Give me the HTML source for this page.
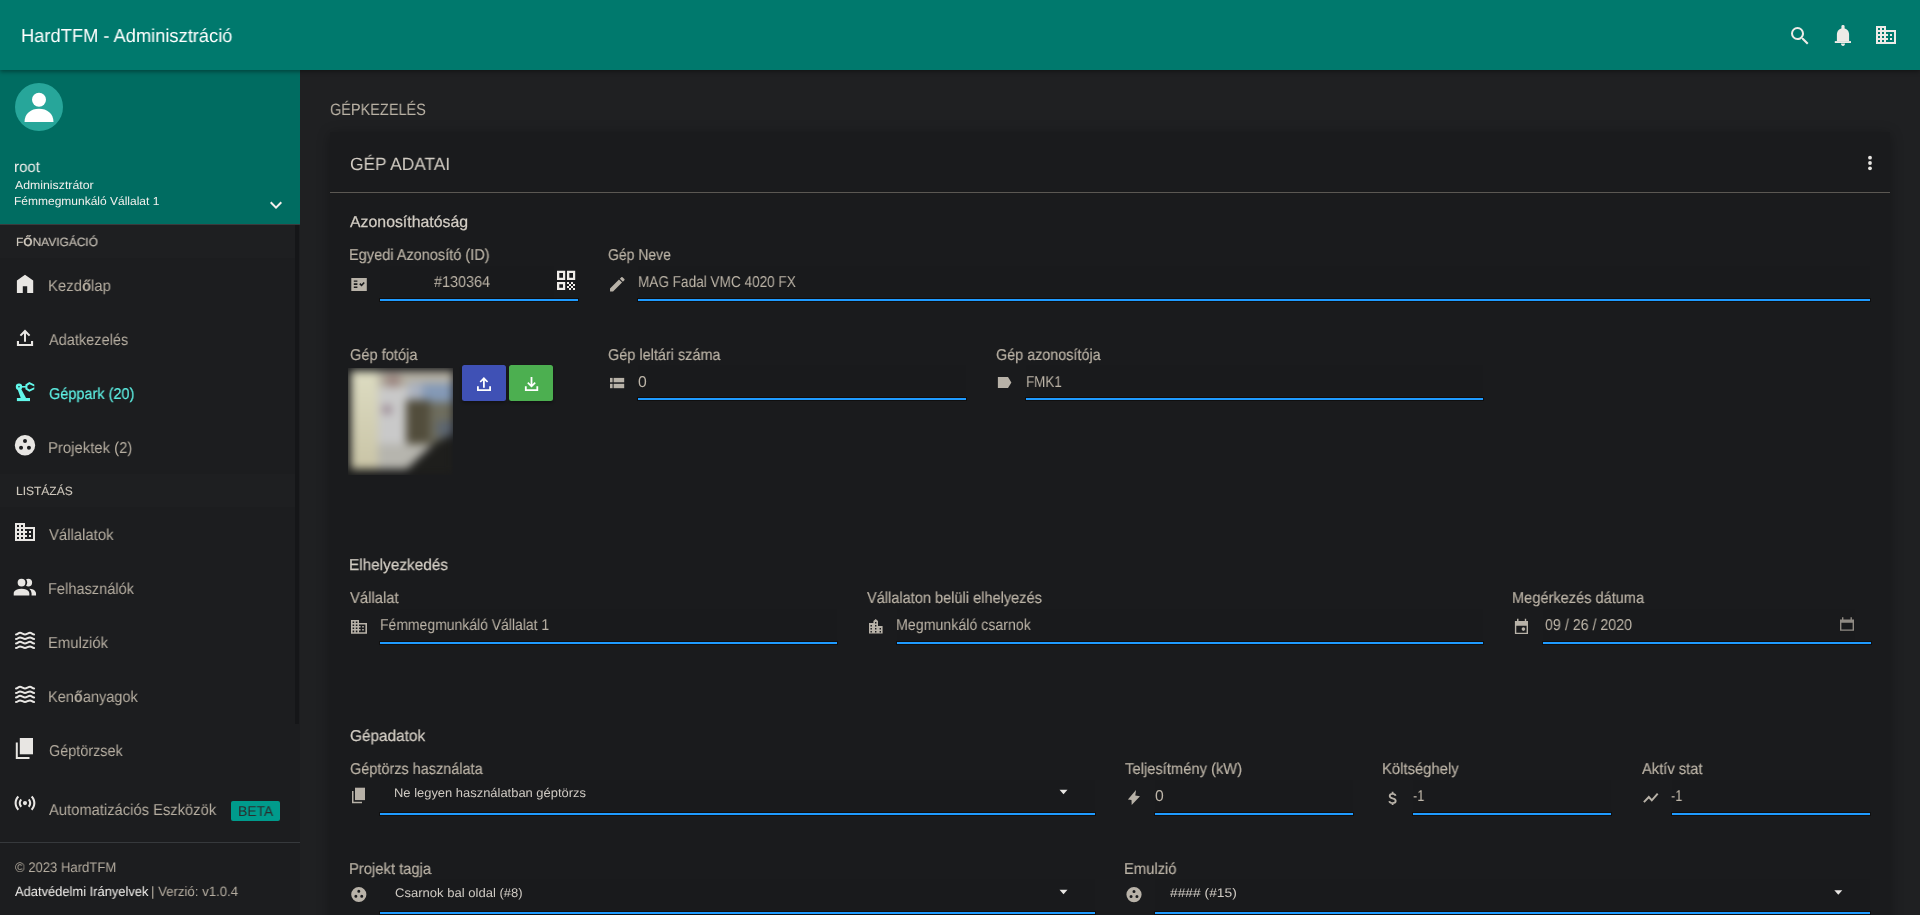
<!DOCTYPE html>
<html><head><meta charset="utf-8"><title>HardTFM - Adminisztráció</title>
<style>
html,body{text-rendering:geometricPrecision;margin:0;padding:0;width:1920px;height:915px;overflow:hidden;background:#1f2022;font-family:"Liberation Sans",sans-serif;}
.a{position:absolute;}
.t{position:absolute;z-index:5;will-change:transform;white-space:nowrap;font-family:"Liberation Sans",sans-serif;}
svg{position:absolute;z-index:5;overflow:visible;}
.ul{position:absolute;height:2px;background:#1f9bff;box-shadow:0 0 0 1px rgba(10,6,4,0.55);}
.slot{position:absolute;background:#191a1c;}

</style></head><body>
<!-- header -->
<div class="a" style="left:0;top:0;width:1920px;height:70px;background:#00796d;box-shadow:0 2px 4px rgba(0,0,0,0.35);z-index:3"></div>
<!-- sidebar -->
<div class="a" style="left:0;top:70px;width:300px;height:845px;background:#1c1d1f;z-index:1"></div>
<div class="a" style="left:295px;top:224px;width:4px;height:500px;background:#151618;z-index:2"></div>
<div class="a" style="left:0;top:70px;width:300px;height:154px;background:#006c61;z-index:2"></div>
<div class="a" style="left:0;top:224px;width:295px;height:34px;background:#1e1f21;z-index:2"></div>
<div class="a" style="left:0;top:474px;width:295px;height:33px;background:#1e1f21;z-index:2"></div>
<div class="a" style="left:0;top:224px;width:300px;height:1px;background:#3a3b3d;z-index:2"></div>
<div class="a" style="left:15px;top:83px;width:48px;height:48px;border-radius:50%;background:#27a69a;z-index:2"></div>
<div class="a" style="left:0;top:842px;width:300px;height:1px;background:#36393c;z-index:2"></div>
<div class="a" style="left:231px;top:801px;width:49px;height:20px;border-radius:2px;background:#009b8c;z-index:2"></div>
<!-- card -->
<div class="a" style="left:330px;top:132px;width:1560px;height:800px;background:#1a1b1d;box-shadow:0 2px 12px rgba(0,0,0,0.3);"></div>
<div class="a" style="left:330px;top:192px;width:1560px;height:1px;background:#5b5853;"></div>
<!-- slots -->
<div class="slot" style="left:380px;top:266px;width:174px;height:33px"></div>
<div class="slot" style="left:638px;top:266px;width:1232px;height:33px"></div>
<div class="slot" style="left:638px;top:365px;width:328px;height:33px"></div>
<div class="slot" style="left:1026px;top:365px;width:457px;height:33px"></div>
<div class="slot" style="left:380px;top:609px;width:457px;height:33px"></div>
<div class="slot" style="left:897px;top:609px;width:586px;height:33px"></div>
<div class="slot" style="left:1543px;top:609px;width:312px;height:33px"></div>
<div class="slot" style="left:380px;top:780px;width:715px;height:33px"></div>
<div class="slot" style="left:1155px;top:780px;width:198px;height:33px"></div>
<div class="slot" style="left:1413px;top:780px;width:198px;height:33px"></div>
<div class="slot" style="left:1672px;top:780px;width:198px;height:33px"></div>
<div class="slot" style="left:380px;top:879px;width:715px;height:33px"></div>
<div class="slot" style="left:1155px;top:879px;width:715px;height:33px"></div>
<!-- underlines -->
<div class="ul" style="left:380px;top:299px;width:198px"></div>
<div class="ul" style="left:638px;top:299px;width:1232px"></div>
<div class="ul" style="left:638px;top:398px;width:328px"></div>
<div class="ul" style="left:1026px;top:398px;width:457px"></div>
<div class="ul" style="left:380px;top:642px;width:457px"></div>
<div class="ul" style="left:897px;top:642px;width:586px"></div>
<div class="ul" style="left:1543px;top:642px;width:328px"></div>
<div class="ul" style="left:380px;top:813px;width:715px"></div>
<div class="ul" style="left:1155px;top:813px;width:198px"></div>
<div class="ul" style="left:1413px;top:813px;width:198px"></div>
<div class="ul" style="left:1672px;top:813px;width:198px"></div>
<div class="ul" style="left:380px;top:912px;width:715px"></div>
<div class="ul" style="left:1155px;top:912px;width:715px"></div>
<!-- photo -->
<div class="a" style="left:348px;top:368px;width:105px;height:107px;overflow:hidden;background:#1a1b1d">
 <div class="a" style="left:0;top:0;width:105px;height:107px;filter:blur(4.5px)">
  <div class="a" style="left:3px;top:3px;width:100px;height:100px;background:#b9b6a8"></div>
  <div class="a" style="left:3px;top:3px;width:28px;height:99px;background:linear-gradient(#dddcc2,#c9c4a6)"></div>
  <div class="a" style="left:30px;top:18px;width:30px;height:84px;background:#c9c9c9"></div>
  <div class="a" style="left:30px;top:3px;width:75px;height:16px;background:#b5b0a2"></div>
  <div class="a" style="left:37px;top:6px;width:16px;height:13px;background:#9b8680;border-radius:40%"></div>
  <div class="a" style="left:34px;top:37px;width:10px;height:9px;background:#9c8a94;border-radius:40%"></div>
  <div class="a" style="left:60px;top:14px;width:45px;height:20px;background:#abb2bf"></div>
  <div class="a" style="left:74px;top:16px;width:31px;height:18px;background:#8499b6"></div>
  <div class="a" style="left:58px;top:32px;width:24px;height:46px;background:#524d3c"></div>
  <div class="a" style="left:82px;top:34px;width:23px;height:42px;background:#6e6d5e"></div>
  <div class="a" style="left:89px;top:53px;width:16px;height:16px;background:#5c6570"></div>
  <div class="a" style="left:30px;top:76px;width:60px;height:27px;background:#b6b5ae"></div>
  <div class="a" style="left:0;top:0;width:105px;height:107px;background:#1e1e1c;clip-path:polygon(82% 70%,100% 62%,100% 100%,50% 100%)"></div>
  <div class="a" style="left:0;top:101px;width:105px;height:6px;background:#1e1e1c"></div>
 </div>
</div>
<!-- buttons -->
<div class="a" style="left:462px;top:365px;width:44px;height:36px;background:#3f51b5;border-radius:2.5px;box-shadow:0 2px 3px rgba(0,0,0,0.3)"></div>
<div class="a" style="left:509px;top:365px;width:44px;height:36px;background:#4caf50;border-radius:2.5px;box-shadow:0 2px 3px rgba(0,0,0,0.3)"></div>
<svg width="1920" height="915" style="left:0;top:0;z-index:6">
<!-- header icons -->
<g fill="#eeebe7">
 <g transform="translate(1787.8,23.8)"><path d="M9.5,3A6.5,6.5 0 0,1 16,9.5C16,11.11 15.41,12.59 14.44,13.73L14.71,14H15.5L20.5,19L19,20.5L14,15.5V14.71L13.73,14.44C12.59,15.41 11.11,16 9.5,16A6.5,6.5 0 0,1 3,9.5A6.5,6.5 0 0,1 9.5,3M9.5,5C7,5 5,7 5,9.5C5,12 7,14 9.5,14C12,14 14,12 14,9.5C14,7 12,5 9.5,5Z" transform="translate(0.2,0.2) scale(1.0)"/></g>
 <!-- bell -->
 <rect x="1841.4" y="25" width="3.2" height="4.5" rx="1.4"/>
 <path d="M1836.9,41.2 V34.5 C1836.9,30.6 1839.6,28.2 1843,28.2 C1846.4,28.2 1849.1,30.6 1849.1,34.5 V41.2 Z"/>
 <rect x="1834.8" y="41.1" width="16.2" height="1.9"/>
 <path d="M1841,43.6 H1845 C1845,45 1844.2,46 1843,46 C1841.8,46 1841,45 1841,43.6Z"/>
 <g transform="translate(1874,23)"><path d="M18,15H16V17H18M18,11H16V13H18M20,19H12V17H14V15H12V13H14V11H12V9H20M10,7H8V5H10M10,11H8V9H10M10,15H8V13H10M10,19H8V17H10M6,7H4V5H6M6,11H4V9H6M6,15H4V13H6M6,19H4V17H6M12,7V3H2V21H22V7H12Z"/></g>
</g>
<!-- avatar person -->
<g fill="#ffffff">
 <circle cx="39" cy="99.7" r="7"/>
 <path d="M24.5,122 C24.5,113.5 31,108.8 39,108.8 C47,108.8 53.5,113.5 53.5,122 Z"/>
</g>
<!-- chevron -->
<g transform="translate(264,193)" fill="#f4efec"><path d="M7.41,8.58L12,13.17L16.59,8.58L18,10L12,16L6,10L7.41,8.58Z"/></g>
<!-- nav icons -->
<g fill="#e8e6e3">
 <!-- home -->
 <path d="M25,274.8 L33.2,280.5 V293 H27.2 V286.2 H22.8 V293 H16.9 V280.5 Z"/>
 <!-- upload tray -->
 <path d="M25,329.6 L30.3,334.9 L28.9,336.3 L26,333.4 V341.8 H24 V333.4 L21.1,336.3 L19.7,334.9 Z"/>
 <path d="M16.9,341 H19 V344 H31 V341 H33.1 V346.1 H16.9 Z"/>
 <!-- projektek circle -->
 <path fill-rule="evenodd" d="M25.00,435.10 A10.2,10.2 0 1,1 25.00,455.50 A10.2,10.2 0 1,1 25.00,435.10 Z M25.00,439.10 A2.0,2.0 0 1,0 25.00,443.10 A2.0,2.0 0 1,0 25.00,439.10 Z M21.05,445.70 A2.0,2.0 0 1,0 21.05,449.70 A2.0,2.0 0 1,0 21.05,445.70 Z M28.95,445.70 A2.0,2.0 0 1,0 28.95,449.70 A2.0,2.0 0 1,0 28.95,445.70 Z"/>
 <!-- domain -->
 <g transform="translate(13,520)"><path d="M18,15H16V17H18M18,11H16V13H18M20,19H12V17H14V15H12V13H14V11H12V9H20M10,7H8V5H10M10,11H8V9H10M10,15H8V13H10M10,19H8V17H10M6,7H4V5H6M6,11H4V9H6M6,15H4V13H6M6,19H4V17H6M12,7V3H2V21H22V7H12Z"/></g>
 <!-- people -->
 <g transform="translate(11.5,574.2) scale(1.115)"><path d="M16 17V19H2V17S2 13 9 13 16 17 16 17M12.5 7.5A3.5 3.5 0 1 0 9 11A3.5 3.5 0 0 0 12.5 7.5M15.94 13A5.32 5.32 0 0 1 18 17V19H22V17S22 13.37 15.94 13M15 4A3.39 3.39 0 0 0 13.07 4.59A5 5 0 0 1 13.07 10.41A3.39 3.39 0 0 0 15 11A3.5 3.5 0 0 0 18.5 7.5A3.5 3.5 0 0 0 15 4Z"/></g>
 <!-- copy sheets -->
 <rect x="19.8" y="738" width="13.2" height="16.3"/>
 <path d="M15.8,742.5 H17.8 V757 H29.5 V759 H15.8 Z"/>
</g>
<g fill="none" stroke="#e8e6e3" stroke-width="2" stroke-linecap="round">
 <path d="M16,634.4 C17.8,634.4 18.2,632.8 20,632.8 C21.8,632.8 23.2,634.4 25,634.4 C26.8,634.4 28.2,632.8 30,632.8 C31.8,632.8 32.2,634.4 34.1,634.4"/>
 <path d="M16,639.0 C17.8,639.0 18.2,637.4 20,637.4 C21.8,637.4 23.2,639.0 25,639.0 C26.8,639.0 28.2,637.4 30,637.4 C31.8,637.4 32.2,639.0 34.1,639.0"/>
 <path d="M16,643.4 C17.8,643.4 18.2,641.8 20,641.8 C21.8,641.8 23.2,643.4 25,643.4 C26.8,643.4 28.2,641.8 30,641.8 C31.8,641.8 32.2,643.4 34.1,643.4"/>
 <path d="M16,648.0 C17.8,648.0 18.2,646.4 20,646.4 C21.8,646.4 23.2,648.0 25,648.0 C26.8,648.0 28.2,646.4 30,646.4 C31.8,646.4 32.2,648.0 34.1,648.0"/>
 <path d="M16,688.4 C17.8,688.4 18.2,686.8 20,686.8 C21.8,686.8 23.2,688.4 25,688.4 C26.8,688.4 28.2,686.8 30,686.8 C31.8,686.8 32.2,688.4 34.1,688.4"/>
 <path d="M16,693.0 C17.8,693.0 18.2,691.4 20,691.4 C21.8,691.4 23.2,693.0 25,693.0 C26.8,693.0 28.2,691.4 30,691.4 C31.8,691.4 32.2,693.0 34.1,693.0"/>
 <path d="M16,697.4 C17.8,697.4 18.2,695.8 20,695.8 C21.8,695.8 23.2,697.4 25,697.4 C26.8,697.4 28.2,695.8 30,695.8 C31.8,695.8 32.2,697.4 34.1,697.4"/>
 <path d="M16,702.0 C17.8,702.0 18.2,700.4 20,700.4 C21.8,700.4 23.2,702.0 25,702.0 C26.8,702.0 28.2,700.4 30,700.4 C31.8,700.4 32.2,702.0 34.1,702.0"/>
</g>
<g fill="#e8e6e3" transform="translate(12.5,790.6) scale(1.04)"><path d="M4.93,4.93C3.12,6.74 2,9.24 2,12C2,14.76 3.12,17.26 4.93,19.07L6.34,17.66C4.89,16.22 4,14.22 4,12C4,9.79 4.89,7.78 6.34,6.34L4.93,4.93M19.07,4.93L17.66,6.34C19.11,7.78 20,9.79 20,12C20,14.22 19.11,16.22 17.66,17.66L19.07,19.07C20.88,17.26 22,14.76 22,12C22,9.24 20.88,6.74 19.07,4.93M7.76,7.76C6.67,8.85 6,10.35 6,12C6,13.65 6.67,15.15 7.76,16.24L9.17,14.83C8.45,14.11 8,13.11 8,12C8,10.89 8.45,9.89 9.17,9.17L7.76,7.76M16.24,7.76L14.830,9.17C15.55,9.89 16,10.89 16,12C16,13.11 15.55,14.11 14.83,14.83L16.24,16.24C17.33,15.15 18,13.65 18,12C18,10.35 17.33,8.85 16.24,7.76M12,10A2,2 0 0,0 10,12A2,2 0 0,0 12,14A2,2 0 0,0 14,12A2,2 0 0,0 12,10Z"/></g>
<!-- robot arm (active) -->
<g fill="#62f7ea">
 <rect x="16.9" y="398" width="13.1" height="3.1"/>
 <path d="M17.3,388.5 L20.4,387.5 L26.2,398.2 L20.8,398.2 Z"/>
 <path fill-rule="evenodd" d="M19,383.6 A3.2,3.2 0 1,1 19,390 A3.2,3.2 0 1,1 19,383.6 Z M19,386 A0.8,0.8 0 1,0 19,387.6 A0.8,0.8 0 1,0 19,386 Z"/>
 <rect x="21.5" y="386" width="5" height="1.6"/>
 <path d="M25.4,384.6 L29.3,382.1 L34.3,384.6 L34.3,386.6 L29.6,384.3 L27.4,385.8 L27.4,388.2 L29.6,389.6 L34.3,387.3 L34.3,389.3 L29.3,391.7 L25.4,389.2 Z"/>
</g>
<!-- card more -->
<g fill="#e8e6e3"><circle cx="1870" cy="157.7" r="1.9"/><circle cx="1870" cy="163" r="1.9"/><circle cx="1870" cy="168.3" r="1.9"/></g>
<!-- field icons -->
<g fill="#b8b2a8">
 <!-- id card check -->
 <path fill-rule="evenodd" d="M351.3,278 H366.8 V290.9 H351.3 Z M353.8,280.6 V281.8 H357.4 V280.6 Z M353.8,283.3 V284.9 H357.4 V283.3 Z M353.8,286.4 V288 H357.4 V286.4 Z M359.2,284.3 L360.4,283.1 L361.6,284.3 L363.6,282 L364.8,283.1 L361.6,286.5 Z"/>
 <!-- pencil -->
 <g transform="translate(607.6,274.5) scale(0.81)"><path d="M20.71,7.04C21.1,6.65 21.1,6 20.71,5.63L18.37,3.29C18,2.9 17.35,2.9 16.96,3.29L15.12,5.12L18.87,8.87M3,17.25V21H6.75L17.81,9.93L14.06,6.18L3,17.25Z"/></g>
 <!-- list -->
 <rect x="610" y="377.9" width="2.6" height="4.4"/><rect x="613.6" y="377.9" width="10.6" height="4.4"/>
 <rect x="610" y="383.8" width="2.6" height="4.4"/><rect x="613.6" y="383.8" width="10.6" height="4.4"/>
 <!-- tag -->
 <path d="M997.9,377.1 H1008 L1011.4,382.55 L1008,388 H997.9 Z"/>
 <!-- domain small -->
 <g transform="translate(349.4,617.7) scale(0.8,0.76)"><path d="M18,15H16V17H18M18,11H16V13H18M20,19H12V17H14V15H12V13H14V11H12V9H20M10,7H8V5H10M10,11H8V9H10M10,15H8V13H10M10,19H8V17H10M6,7H4V5H6M6,11H4V9H6M6,15H4V13H6M6,19H4V17H6M12,7V3H2V21H22V7H12Z"/></g>
 <!-- city -->
 <path fill-rule="evenodd" d="M869,623 H873.4 V621 L875.7,619 L878,621 V626 H882.6 V633.6 H869 Z M870.5,625 v1.4 h1.4 v-1.4 Z M870.5,628 v1.4 h1.4 v-1.4 Z M870.5,631 v1.4 h1.4 v-1.4 Z M875,622 v1.4 h1.4 v-1.4 Z M875,625 v1.4 h1.4 v-1.4 Z M875,628 v1.4 h1.4 v-1.4 Z M875,631 v1.4 h1.4 v-1.4 Z M879.6,628 v1.4 h1.4 v-1.4 Z M879.6,631 v1.4 h1.4 v-1.4 Z"/>
 <!-- calendar today -->
 <path fill-rule="evenodd" d="M1514.9,621 H1517 V618.8 H1518.5 V621 H1524.8 V618.8 H1526.2 V621 H1528 V634.1 H1514.9 Z M1516.3,625.8 V632.7 H1526.6 V625.8 Z"/>
 <circle cx="1523.4" cy="629.1" r="1.8"/>
 <!-- copy small -->
 <rect x="355" y="787.7" width="10" height="12.4"/>
 <path d="M352,791 H353.5 V801.8 H362 V803.3 H352 Z"/>
 <!-- bolt -->
 <path d="M1136,789.9 L1135.3,795.4 L1140,796.2 L1131.7,805 L1131.5,800 L1127.9,799.5 Z"/>
 <!-- project small -->
 <path fill-rule="evenodd" d="M358.80,886.90 A7.6,7.6 0 1,1 358.80,902.10 A7.6,7.6 0 1,1 358.80,886.90 Z M358.80,889.87 A1.5,1.5 0 1,0 358.80,892.87 A1.5,1.5 0 1,0 358.80,889.87 Z M355.86,894.79 A1.5,1.5 0 1,0 355.86,897.79 A1.5,1.5 0 1,0 355.86,894.79 Z M361.74,894.79 A1.5,1.5 0 1,0 361.74,897.79 A1.5,1.5 0 1,0 361.74,894.79 Z"/>
 <path fill-rule="evenodd" d="M1134.00,887.00 A7.6,7.6 0 1,1 1134.00,902.20 A7.6,7.6 0 1,1 1134.00,887.00 Z M1134.00,889.97 A1.5,1.5 0 1,0 1134.00,892.97 A1.5,1.5 0 1,0 1134.00,889.97 Z M1131.06,894.89 A1.5,1.5 0 1,0 1131.06,897.89 A1.5,1.5 0 1,0 1131.06,894.89 Z M1136.94,894.89 A1.5,1.5 0 1,0 1136.94,897.89 A1.5,1.5 0 1,0 1136.94,894.89 Z"/>
</g>
<!-- $ sign as text-like path -->
<path fill="none" stroke="#b8b2a8" stroke-width="1.8" d="M1395.6,795.8 C1395.3,794.5 1394.2,793.9 1392.6,793.9 C1390.8,793.9 1389.7,794.8 1389.7,796.1 C1389.7,797.6 1391,798 1392.6,798.4 C1394.4,798.8 1395.7,799.4 1395.7,801.1 C1395.7,802.4 1394.4,803.1 1392.6,803.1 C1390.8,803.1 1389.6,802.4 1389.3,801.1 M1392.6,791.8 V793.9 M1392.6,803.1 V805"/>
<!-- trend -->
<polyline points="1643.9,802.1 1648.8,797 1651.8,800.3 1657.7,793.7" fill="none" stroke="#b8b2a8" stroke-width="2"/>
<!-- calendar outline right -->
<path fill="#8f8a83" fill-rule="evenodd" d="M1840,619.5 H1842 V617.2 H1843.4 V619.5 H1850.5 V617.2 H1851.9 V619.5 H1854 V630.8 H1840 Z M1841.4,622.8 V629.4 H1852.6 V622.8 Z"/>
<!-- QR -->
<g fill="#f0ede9">
 <path fill-rule="evenodd" d="M557,270.8 H565.2 V279.9 H557 Z M559.3,273 V277.7 H563 V273 Z"/>
 <path fill-rule="evenodd" d="M567,270.8 H575.2 V279.9 H567 Z M569.3,273 V277.7 H573 V273 Z"/>
 <path fill-rule="evenodd" d="M557,282 H565.2 V290 H557 Z M559.3,284.2 V287.8 H563 V284.2 Z"/>
 <rect x="567" y="282" width="2" height="2"/><rect x="571" y="282" width="2" height="2"/>
 <rect x="569" y="284" width="2" height="2"/><rect x="573" y="284" width="2" height="2"/>
 <rect x="567" y="286" width="2" height="2"/><rect x="571" y="286" width="2" height="2"/>
 <rect x="569" y="288" width="2" height="2"/><rect x="573" y="288" width="2" height="2"/>
</g>
<!-- dropdown arrows -->
<g fill="#e8e6e3">
 <path d="M1059.5,789.8 H1067.5 L1063.5,794.3 Z"/>
 <path d="M1059.5,889.8 H1067.5 L1063.5,894.3 Z"/>
 <path d="M1834.3,890.3 H1842.3 L1838.3,894.8 Z"/>
</g>
<!-- button icons -->
<g fill="#ffffff">
 <path d="M483.9,377.1 L488.2,381.4 L487,382.6 L484.8,380.4 V387.7 H483 V380.4 L480.8,382.6 L479.6,381.4 Z"/>
 <path d="M477,386.2 H478.8 V389.2 H489.2 V386.2 H491 V391.1 H477 Z"/>
 <path d="M531.5,387.6 L535.8,383.3 L534.6,382.1 L532.4,384.3 V377 H530.6 V384.3 L528.4,382.1 L527.2,383.3 Z"/>
 <path d="M524.9,386.2 H526.7 V389.2 H536.4 V386.2 H538.2 V391.1 H524.9 Z"/>
</g>
</svg>

<div class="t" style="left:21.49px;top:27.00px;font-size:18.8px;line-height:18.8px;color:#ffffff;font-weight:normal;transform:scaleX(0.9742);transform-origin:0 0;">HardTFM - Adminisztráció</div>
<div class="t" style="left:14.15px;top:160.00px;font-size:15.5px;line-height:15.5px;color:#f2f0ed;font-weight:normal;transform:scaleX(0.9690);transform-origin:0 0;">root</div>
<div class="t" style="left:14.95px;top:180.00px;font-size:11.8px;line-height:11.8px;color:#f2f0ed;font-weight:normal;transform:scaleX(1.0424);transform-origin:0 0;">Adminisztrátor</div>
<div class="t" style="left:14.21px;top:196.00px;font-size:11.8px;line-height:11.8px;color:#f2f0ed;font-weight:normal;transform:scaleX(1.0170);transform-origin:0 0;">Fémmegmunkáló Vállalat 1</div>
<div class="t" style="left:15.61px;top:236.00px;font-size:12px;line-height:12px;color:#cfc8bd;font-weight:normal;transform:scaleX(0.9929);transform-origin:0 0;-webkit-text-stroke:0.1px #cfc8bd;">F<b>Ő</b>NAVIGÁCIÓ</div>
<div class="t" style="left:48.06px;top:279.00px;font-size:15.75px;line-height:15.75px;color:#b5ada0;font-weight:normal;transform:scaleX(0.9446);transform-origin:0 0;">Kezd<b>ő</b>lap</div>
<div class="t" style="left:49.06px;top:333.00px;font-size:15.75px;line-height:15.75px;color:#b5ada0;font-weight:normal;transform:scaleX(0.9222);transform-origin:0 0;">Adatkezelés</div>
<div class="t" style="left:48.54px;top:387.00px;font-size:15.75px;line-height:15.75px;color:#5ef0e4;font-weight:normal;transform:scaleX(0.9199);transform-origin:0 0;-webkit-text-stroke:0.2px #5ef0e4;">Géppark (20)</div>
<div class="t" style="left:48.06px;top:441.00px;font-size:15.75px;line-height:15.75px;color:#b5ada0;font-weight:normal;transform:scaleX(0.9447);transform-origin:0 0;">Projektek (2)</div>
<div class="t" style="left:15.60px;top:485.00px;font-size:12px;line-height:12px;color:#cfc8bd;font-weight:normal;-webkit-text-stroke:0.1px #cfc8bd;">LISTÁZÁS</div>
<div class="t" style="left:48.99px;top:528.00px;font-size:15.75px;line-height:15.75px;color:#b5ada0;font-weight:normal;transform:scaleX(0.9444);transform-origin:0 0;">Vállalatok</div>
<div class="t" style="left:48.18px;top:582.00px;font-size:15.75px;line-height:15.75px;color:#b5ada0;font-weight:normal;transform:scaleX(0.9255);transform-origin:0 0;">Felhasználók</div>
<div class="t" style="left:48.17px;top:636.00px;font-size:15.75px;line-height:15.75px;color:#b5ada0;font-weight:normal;transform:scaleX(0.9390);transform-origin:0 0;">Emulziók</div>
<div class="t" style="left:48.19px;top:690.00px;font-size:15.75px;line-height:15.75px;color:#b5ada0;font-weight:normal;transform:scaleX(0.9242);transform-origin:0 0;">Ken<b>ő</b>anyagok</div>
<div class="t" style="left:48.64px;top:744.00px;font-size:15.75px;line-height:15.75px;color:#b5ada0;font-weight:normal;transform:scaleX(0.9141);transform-origin:0 0;">Géptörzsek</div>
<div class="t" style="left:49.16px;top:803.00px;font-size:15.75px;line-height:15.75px;color:#b5ada0;font-weight:normal;transform:scaleX(0.9360);transform-origin:0 0;">Automatizációs Eszközök</div>
<div class="t" style="left:237.95px;top:805.00px;font-size:14.2px;line-height:14.2px;color:#2b2d2e;font-weight:normal;transform:scaleX(0.9785);transform-origin:0 0;">BETA</div>
<div class="t" style="left:14.65px;top:860.00px;font-size:14px;line-height:14px;color:#b5ada0;font-weight:normal;transform:scaleX(0.9337);transform-origin:0 0;">© 2023 HardTFM</div>
<div class="t" style="left:15.00px;top:885.00px;font-size:13.5px;line-height:13.5px;color:#f2f0ed;font-weight:normal;transform:scaleX(0.9564);transform-origin:0 0;">Adatvédelmi Irányelvek</div>
<div class="t" style="left:151.30px;top:885.00px;font-size:13.5px;line-height:13.5px;color:#b5ada0;font-weight:normal;transform:scaleX(0.9786);transform-origin:0 0;">| Verzió: v1.0.4</div>
<div class="t" style="left:329.84px;top:102.00px;font-size:16.5px;line-height:16.5px;color:#bab2a5;font-weight:normal;transform:scaleX(0.8794);transform-origin:0 0;">GÉPKEZELÉS</div>
<div class="t" style="left:349.78px;top:156.00px;font-size:17.7px;line-height:17.7px;color:#d3cdc4;font-weight:normal;transform:scaleX(0.9802);transform-origin:0 0;">GÉP ADATAI</div>
<div class="t" style="left:350.34px;top:215.00px;font-size:15.75px;line-height:15.75px;color:#d3cdc4;font-weight:normal;transform:scaleX(1.0065);transform-origin:0 0;-webkit-text-stroke:0.25px #d3cdc4;">Azonosíthatóság</div>
<div class="t" style="left:349.39px;top:248.00px;font-size:15.75px;line-height:15.75px;color:#bab2a5;font-weight:normal;transform:scaleX(0.9232);transform-origin:0 0;-webkit-text-stroke:0.18px #bab2a5;">Egyedi Azonosító (ID)</div>
<div class="t" style="left:433.71px;top:275.00px;font-size:15.75px;line-height:15.75px;color:#bdb5a8;font-weight:normal;transform:scaleX(0.9155);transform-origin:0 0;">#130364</div>
<div class="t" style="left:607.86px;top:248.00px;font-size:15.75px;line-height:15.75px;color:#bab2a5;font-weight:normal;transform:scaleX(0.8859);transform-origin:0 0;-webkit-text-stroke:0.18px #bab2a5;">Gép Neve</div>
<div class="t" style="left:637.57px;top:275.00px;font-size:15.75px;line-height:15.75px;color:#bdb5a8;font-weight:normal;transform:scaleX(0.8625);transform-origin:0 0;">MAG Fadal VMC 4020 FX</div>
<div class="t" style="left:349.63px;top:348.00px;font-size:15.75px;line-height:15.75px;color:#bab2a5;font-weight:normal;transform:scaleX(0.9275);transform-origin:0 0;-webkit-text-stroke:0.18px #bab2a5;">Gép fotója</div>
<div class="t" style="left:607.99px;top:348.00px;font-size:15.75px;line-height:15.75px;color:#bab2a5;font-weight:normal;transform:scaleX(0.9181);transform-origin:0 0;-webkit-text-stroke:0.18px #bab2a5;">Gép leltári száma</div>
<div class="t" style="left:638.11px;top:375.00px;font-size:15.75px;line-height:15.75px;color:#bdb5a8;font-weight:normal;">0</div>
<div class="t" style="left:995.54px;top:348.00px;font-size:15.75px;line-height:15.75px;color:#bab2a5;font-weight:normal;transform:scaleX(0.9121);transform-origin:0 0;-webkit-text-stroke:0.18px #bab2a5;">Gép azonosítója</div>
<div class="t" style="left:1025.58px;top:375.00px;font-size:15.75px;line-height:15.75px;color:#bdb5a8;font-weight:normal;transform:scaleX(0.8517);transform-origin:0 0;">FMK1</div>
<div class="t" style="left:349.32px;top:558.00px;font-size:15.75px;line-height:15.75px;color:#d3cdc4;font-weight:normal;transform:scaleX(0.9741);transform-origin:0 0;-webkit-text-stroke:0.25px #d3cdc4;">Elhelyezkedés</div>
<div class="t" style="left:350.19px;top:591.00px;font-size:15.75px;line-height:15.75px;color:#bab2a5;font-weight:normal;transform:scaleX(0.9418);transform-origin:0 0;-webkit-text-stroke:0.18px #bab2a5;">Vállalat</div>
<div class="t" style="left:379.54px;top:618.00px;font-size:15.75px;line-height:15.75px;color:#bdb5a8;font-weight:normal;transform:scaleX(0.8867);transform-origin:0 0;">Fémmegmunkáló Vállalat 1</div>
<div class="t" style="left:866.90px;top:591.00px;font-size:15.75px;line-height:15.75px;color:#bab2a5;font-weight:normal;transform:scaleX(0.9249);transform-origin:0 0;-webkit-text-stroke:0.18px #bab2a5;">Vállalaton belüli elhelyezés</div>
<div class="t" style="left:896.32px;top:618.00px;font-size:15.75px;line-height:15.75px;color:#bdb5a8;font-weight:normal;transform:scaleX(0.9010);transform-origin:0 0;">Megmunkáló csarnok</div>
<div class="t" style="left:1511.58px;top:591.00px;font-size:15.75px;line-height:15.75px;color:#bab2a5;font-weight:normal;transform:scaleX(0.9255);transform-origin:0 0;-webkit-text-stroke:0.18px #bab2a5;">Megérkezés dátuma</div>
<div class="t" style="left:1545.02px;top:618.00px;font-size:15.75px;line-height:15.75px;color:#bdb5a8;font-weight:normal;transform:scaleX(0.9036);transform-origin:0 0;">09 / 26 / 2020</div>
<div class="t" style="left:349.79px;top:729.00px;font-size:15.75px;line-height:15.75px;color:#d3cdc4;font-weight:normal;transform:scaleX(0.9748);transform-origin:0 0;-webkit-text-stroke:0.25px #d3cdc4;">Gépadatok</div>
<div class="t" style="left:349.84px;top:762.00px;font-size:15.75px;line-height:15.75px;color:#bab2a5;font-weight:normal;transform:scaleX(0.9185);transform-origin:0 0;-webkit-text-stroke:0.18px #bab2a5;">Géptörzs használata</div>
<div class="t" style="left:394.42px;top:787.00px;font-size:12.5px;line-height:12.5px;color:#cfcac3;font-weight:normal;transform:scaleX(1.0347);transform-origin:0 0;">Ne legyen használatban géptörzs</div>
<div class="t" style="left:1124.81px;top:762.00px;font-size:15.75px;line-height:15.75px;color:#bab2a5;font-weight:normal;transform:scaleX(0.9353);transform-origin:0 0;-webkit-text-stroke:0.18px #bab2a5;">Teljesítmény (kW)</div>
<div class="t" style="left:1154.66px;top:789.00px;font-size:15.75px;line-height:15.75px;color:#bdb5a8;font-weight:normal;">0</div>
<div class="t" style="left:1382.26px;top:762.00px;font-size:15.75px;line-height:15.75px;color:#bab2a5;font-weight:normal;transform:scaleX(0.9416);transform-origin:0 0;-webkit-text-stroke:0.18px #bab2a5;">Költséghely</div>
<div class="t" style="left:1412.68px;top:789.00px;font-size:15.75px;line-height:15.75px;color:#bdb5a8;font-weight:normal;transform:scaleX(0.8099);transform-origin:0 0;">-1</div>
<div class="t" style="left:1641.96px;top:762.00px;font-size:15.75px;line-height:15.75px;color:#bab2a5;font-weight:normal;transform:scaleX(0.9320);transform-origin:0 0;-webkit-text-stroke:0.18px #bab2a5;">Aktív stat</div>
<div class="t" style="left:1671.38px;top:789.00px;font-size:15.75px;line-height:15.75px;color:#bdb5a8;font-weight:normal;transform:scaleX(0.8099);transform-origin:0 0;">-1</div>
<div class="t" style="left:349.37px;top:862.00px;font-size:15.75px;line-height:15.75px;color:#bab2a5;font-weight:normal;transform:scaleX(0.9382);transform-origin:0 0;-webkit-text-stroke:0.18px #bab2a5;">Projekt tagja</div>
<div class="t" style="left:394.88px;top:887.00px;font-size:12.5px;line-height:12.5px;color:#cfcac3;font-weight:normal;transform:scaleX(1.0442);transform-origin:0 0;">Csarnok bal oldal (#8)</div>
<div class="t" style="left:1124.47px;top:862.00px;font-size:15.75px;line-height:15.75px;color:#bab2a5;font-weight:normal;transform:scaleX(0.9363);transform-origin:0 0;-webkit-text-stroke:0.18px #bab2a5;">Emulzió</div>
<div class="t" style="left:1170.41px;top:887.00px;font-size:12.5px;line-height:12.5px;color:#cfcac3;font-weight:normal;transform:scaleX(1.1048);transform-origin:0 0;">#### (#15)</div>
</body></html>
